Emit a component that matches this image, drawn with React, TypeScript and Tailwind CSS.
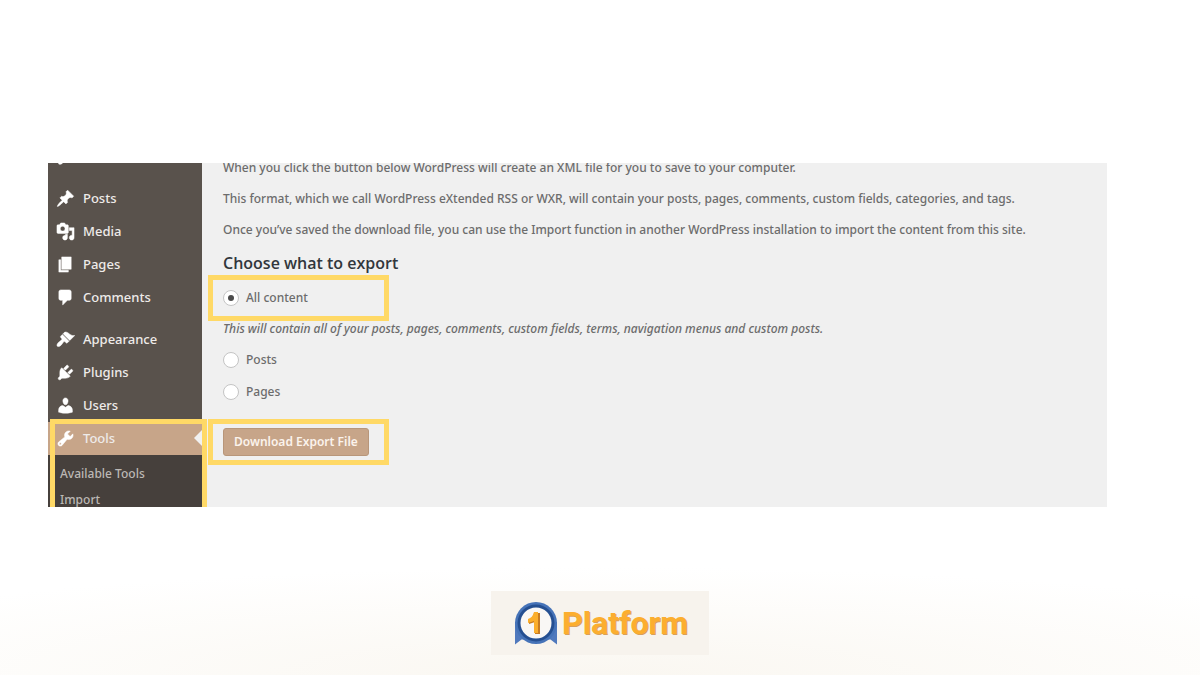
import { useState, type ReactNode } from "react";

type MenuItem = { label: string; path: string };

const contentItems: MenuItem[] = [
  {
    label: "Posts",
    path: "M10.44 3.02l1.82-1.82 6.36 6.35-1.83 1.82c-1.05-.68-2.48-.57-3.41.36l-.75.75c-.92.93-1.04 2.35-.35 3.41l-1.83 1.82-2.41-2.41-2.8 2.79c-.42.42-3.38 2.71-3.8 2.29s1.86-3.39 2.28-3.81l2.79-2.79L4.1 9.36l1.83-1.82c1.05.69 2.48.57 3.4-.36l.75-.75c.93-.92 1.05-2.35.36-3.41z",
  },
  {
    label: "Media",
    path: "M13 11V4c0-.55-.45-1-1-1h-1.67L9 1H5L3.67 3H2c-.55 0-1 .45-1 1v7c0 .55.45 1 1 1h10c.55 0 1-.45 1-1zM7 4.5c1.38 0 2.5 1.12 2.5 2.5S8.38 9.5 7 9.5 4.5 8.38 4.5 7 5.62 4.5 7 4.5zM14 6h5v10.5c0 1.38-1.12 2.5-2.5 2.5S14 17.88 14 16.5s1.12-2.5 2.5-2.5c.17 0 .34.02.5.05V9h-3V6zm-4 8.05V13h2v3.5c0 1.38-1.12 2.5-2.5 2.5S7 17.88 7 16.5 8.12 14 9.5 14c.17 0 .34.02.5.05z",
  },
  { label: "Pages", path: "M6 15V2h10v13H6zm-1 1h8v2H3V5h2v11z" },
  {
    label: "Comments",
    path: "M5 2h9c1.1 0 2 .9 2 2v7c0 1.1-.9 2-2 2h-2l-5 5v-5H5c-1.1 0-2-.9-2-2V4c0-1.1.9-2 2-2z",
  },
];

const adminItems: MenuItem[] = [
  {
    label: "Appearance",
    path: "M14.48 11.06L7.41 3.99l1.5-1.5c.5-.56 2.3-.47 3.51.32 1.21.8 1.43 1.28 2.91 2.1 1.18.64 2.45 1.26 4.45.85zm-.71.71L6.7 4.7 4.93 6.47c-.39.39-.39 1.02 0 1.41l1.06 1.06c.39.39.39 1.03 0 1.42-.6.6-1.43 1.11-2.21 1.69-.35.26-.7.53-1.01.84C1.43 14.23.4 16.08 1.4 17.07c.99 1 2.84-.03 4.18-1.36.31-.31.58-.66.85-1.02.57-.78 1.08-1.61 1.69-2.21.39-.39 1.02-.39 1.41 0l1.06 1.06c.39.39 1.02.39 1.41 0z",
  },
  {
    label: "Plugins",
    path: "M13.11 4.36L9.87 7.6 8 5.73l3.24-3.24c.35-.34 1.05-.2 1.56.32.52.51.66 1.21.31 1.55zm-8 1.77l.91-1.12 9.01 9.01-1.19.84c-.71.71-2.63 1.16-3.82 1.16H6.14L4.9 17.26c-.59.59-1.54.59-2.12 0-.59-.58-.59-1.53 0-2.12l1.24-1.24v-3.88c0-1.13.4-3.19 1.09-3.89zm7.26 3.97l3.24-3.24c.34-.35 1.04-.21 1.55.31.52.51.66 1.21.31 1.55l-3.24 3.25z",
  },
  {
    label: "Users",
    path: "M10 9.25c-2.27 0-2.73-3.44-2.73-3.44C7 4.02 7.82 2 9.97 2c2.16 0 2.98 2.02 2.71 3.81 0 0-.41 3.44-2.68 3.44zm0 2.57L12.72 10c2.39 0 4.52 2.33 4.52 4.53v2.49s-3.65 1.13-7.24 1.13c-3.65 0-7.24-1.13-7.24-1.13v-2.49c0-2.25 1.94-4.48 4.47-4.48z",
  },
];

const tools: MenuItem = {
  label: "Tools",
  path: "M16.68 9.77c-1.34 1.34-3.3 1.67-4.95.99l-5.41 6.52c-.99.99-2.59.99-3.58 0s-.99-2.59 0-3.57l6.52-5.42c-.68-1.65-.35-3.61.99-4.95 1.28-1.28 3.12-1.62 4.72-1.06l-2.89 2.89 2.82 2.82 2.86-2.87c.53 1.58.18 3.39-1.08 4.65zM3.81 16.21c.4.39 1.04.39 1.43 0 .4-.4.4-1.04 0-1.43-.39-.4-1.03-.4-1.43 0-.39.39-.39 1.03 0 1.43z",
};

function MenuLink({ item }: { item: MenuItem }) {
  return (
    <a href="#" className="flex h-[33px] items-center gap-2 pl-2 font-['Noto_Sans',sans-serif] text-[13px] font-medium text-[#eeebe9]">
      <svg viewBox="0 0 20 20" className="size-[19px] fill-white stroke-white [stroke-width:0.5]" aria-hidden="true">
        <path d={item.path} />
      </svg>
      {item.label}
    </a>
  );
}

function Sidebar() {
  return (
    <nav className="relative z-10 w-[154px] shrink-0 bg-[#59524c]">
      <svg viewBox="0 0 154 19" className="h-[19px] w-full fill-white" aria-hidden="true">
        <path d="M10 0h5l-2 1.5h-2z" />
      </svg>
      <ul>
        {contentItems.map((item) => (
          <li key={item.label}>
            <MenuLink item={item} />
          </li>
        ))}
      </ul>
      <ul className="mt-[9px]">
        {adminItems.map((item) => (
          <li key={item.label}>
            <MenuLink item={item} />
          </li>
        ))}
        <li className="relative">
          <div className="relative bg-[#c7a589]">
            <MenuLink item={tools} />
            <svg viewBox="0 0 8 16" className="absolute top-2 right-0 h-4 w-2 fill-[#f1f1f1]" aria-hidden="true">
              <path d="M8 0v16L0 8z" />
            </svg>
          </div>
          <ul className="bg-[#46403c] pt-[6px] pl-3 font-['Noto_Sans',sans-serif] text-xs font-medium text-[#bcb8b5]">
            <li>
              <a href="#" className="block leading-[26px]">Available Tools</a>
            </li>
            <li>
              <a href="#" className="block h-5 leading-[26px]">Import</a>
            </li>
          </ul>
          <div className="pointer-events-none absolute -top-[3px] -right-[5px] bottom-0 left-[2px] border-[5px] border-b-0 border-[#ffd966]" />
        </li>
      </ul>
    </nav>
  );
}

function Highlight({ children }: { children: ReactNode }) {
  return (
    <div className="flex h-[46px] w-[181px] items-center border-[5px] border-[#ffd966] pl-[10px]">
      {children}
    </div>
  );
}

function Choice({ label, value, selected, onSelect }: {
  label: string;
  value: string;
  selected: string;
  onSelect: (value: string) => void;
}) {
  return (
    <label className="flex h-8 items-center gap-[7px]">
      <input
        type="radio"
        name="content"
        value={value}
        checked={selected === value}
        onChange={() => onSelect(value)}
        className="grid size-4 appearance-none place-items-center rounded-full border border-[#c4c4c4] bg-white before:size-[6px] before:rounded-full checked:before:bg-[#4a4a4a]"
      />
      {label}
    </label>
  );
}

function ExportForm() {
  const [selected, setSelected] = useState("all");
  return (
    <form
      className="min-w-0 flex-1 bg-[#f0f0f0] pl-[6px] font-['Noto_Sans',sans-serif] text-xs font-medium text-[#6c6c6c]"
      onSubmit={(e) => e.preventDefault()}
    >
      <div className="-mt-[5px] flex flex-col gap-[11px] pl-[15px] leading-5">
        <p>When you click the button below WordPress will create an XML file for you to save to your computer.</p>
        <p>This format, which we call WordPress eXtended RSS or WXR, will contain your posts, pages, comments, custom fields, categories, and tags.</p>
        <p>Once you’ve saved the download file, you can use the Import function in another WordPress installation to import the content from this site.</p>
      </div>
      <h3 className="mt-[11px] pl-[15px] font-['Open_Sans',sans-serif] text-base leading-6 font-semibold text-[#32373c]">Choose what to export</h3>
      <Highlight>
        <Choice label="All content" value="all" selected={selected} onSelect={setSelected} />
      </Highlight>
      <p className="pl-[15px] leading-4 italic">
        This will contain all of your posts, pages, comments, custom fields, terms, navigation menus and custom posts.
      </p>
      <div className="mt-[7px] mb-[11px] pl-[15px]">
        <Choice label="Posts" value="posts" selected={selected} onSelect={setSelected} />
        <Choice label="Pages" value="pages" selected={selected} onSelect={setSelected} />
      </div>
      <Highlight>
        <button
          type="submit"
          className="h-7 rounded-[3px] border border-[#b8967a] bg-[#c7a589] px-[10px] font-semibold whitespace-nowrap text-[#fbf3ec]"
        >
          Download Export File
        </button>
      </Highlight>
    </form>
  );
}

function Logo() {
  return (
    <div className="flex h-16 w-[218px] items-center gap-1 bg-[#f7f3ed] pl-[23px]">
      <svg viewBox="0 0 44 44" className="size-11" aria-hidden="true">
        <path d="M1 21v22.500l6.500-5h29l6.500 5V21z" fill="#5079bd" />
        <circle cx="22" cy="22" r="21" fill="#4673b8" />
        <circle cx="22" cy="22" r="18.500" fill="#254f91" />
        <circle cx="22" cy="22" r="15.500" fill="#f9f7f5" />
        <path d="M20 12h6v21h-5V21l-6 2v-4c3-1 4-3 5-7z" fill="#c77b22" />
        <path d="M20 11h4v21h-4V20l-6 2v-4c3-1 5-3 6-7z" fill="#fbae2b" />
      </svg>
      <span className="font-['Roboto',sans-serif] text-[32px] leading-none font-bold text-[#fcae2f] [text-shadow:1px_1px_0_#d9a05a]">
        Platform
      </span>
    </div>
  );
}

export default function App() {
  return (
    <div className="flex min-h-screen flex-col bg-white bg-[radial-gradient(ellipse_75%_16%_at_50%_100%,#faf7f1,#ffffff)] pt-[163px] font-['Open_Sans',sans-serif]">
      <main className="mr-[93px] ml-12 flex overflow-hidden">
        <Sidebar />
        <ExportForm />
      </main>
      <footer className="mt-auto flex justify-center pb-5">
        <Logo />
      </footer>
    </div>
  );
}
